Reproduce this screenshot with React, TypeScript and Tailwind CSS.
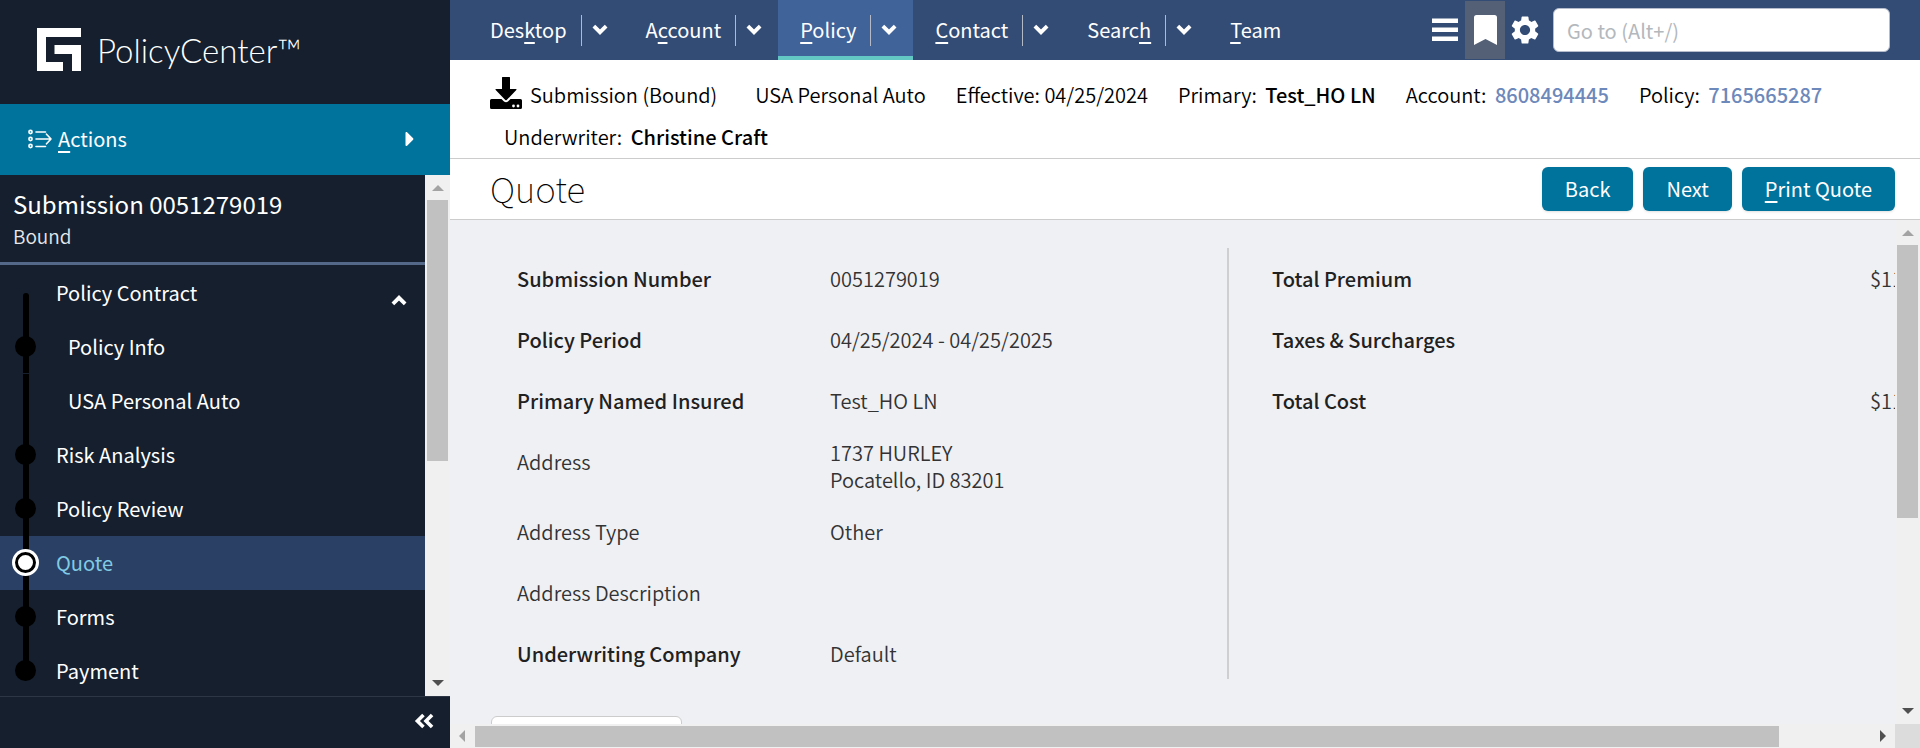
import React from "react";
import { FaCaretRight } from "react-icons/fa";
import { MdSettings } from "react-icons/md";

function Key({ children }: { children: React.ReactNode }) {
  return <span className="underline decoration-2 underline-offset-4 [text-decoration-skip-ink:none]">{children}</span>;
}

function Logo() {
  return (
    <svg className="size-11" viewBox="0 0 44 44" fill="#fff" aria-hidden="true">
      <path d="M0 0H44V9H9V34H26V43H0Z" />
      <path d="M17.500 17H44V43H35V26H17.500Z" />
    </svg>
  );
}

function ActionsIcon() {
  return (
    <svg className="h-5 w-6" viewBox="0 0 24 20" fill="none" stroke="#fff" strokeWidth="1.6" strokeLinecap="round" strokeLinejoin="round" aria-hidden="true">
      <circle cx="2.500" cy="3" r="1.600" />
      <circle cx="2.500" cy="10" r="1.600" />
      <circle cx="2.500" cy="17" r="1.600" />
      <path d="M8 3H17.500M8 10H23M8 17.500H17.500M18.500 5.200 23 10 18.500 14.800" />
    </svg>
  );
}

function Chevron({ up }: { up?: boolean }) {
  return (
    <svg className={up ? "mt-[14px] size-4" : "size-4"} viewBox="0 0 16 16" fill="none" stroke="#fff" strokeWidth="3.8" strokeLinecap="square" aria-hidden="true">
      <path d={up ? "M3.200 10.600 8 5.800 12.800 10.600" : "M3.200 5.400 8 10.200 12.800 5.400"} />
    </svg>
  );
}

function CollapseIcon() {
  return (
    <svg className="h-4 w-5" viewBox="0 0 20 16" fill="none" stroke="#fff" strokeWidth="3.6" strokeLinecap="square" aria-hidden="true">
      <path d="M8.200 3.200 3.400 8 8.200 12.800M16.800 3.200 12 8 16.800 12.800" />
    </svg>
  );
}

function SubmissionIcon() {
  return (
    <svg className="size-8" viewBox="0 0 32 32" aria-hidden="true">
      <path d="M12 0.500Q12 0 12.500 0H19.500Q20 0 20 0.500V12H26Q27 12 26.300 13L16.700 23Q16 23.700 15.300 23L5.700 13Q5 12 6 12H12Z" />
      <path d="M1.500 22H11.500L14 24.500Q16 26 18 24.500L20.500 22H30.500Q32 22 32 23.500V30.500Q32 32 30.500 32H1.500Q0 32 0 30.500V23.500Q0 22 1.500 22Z" />
      <circle cx="23.500" cy="29" r="1.400" fill="#fff" />
      <circle cx="28" cy="29" r="1.400" fill="#fff" />
    </svg>
  );
}

function Arrow({ dir, muted }: { dir: "up" | "down" | "left" | "right"; muted?: boolean }) {
  const d = {
    up: "M6 9 12 3 18 9Z",
    down: "M6 3H18L12 9Z",
    left: "M9 6V18L3 12Z",
    right: "M3 6V18L9 12Z",
  }[dir];
  const vertical = dir === "up" || dir === "down";
  return (
    <svg className={vertical ? "h-3 w-6" : "h-6 w-3"} viewBox={vertical ? "0 0 24 12" : "0 0 12 24"} fill={muted ? "#a3a3a3" : "#505050"} aria-hidden="true">
      <path d={d} />
    </svg>
  );
}

const tabs = [
  { pre: "Des", key: "k", post: "top", menu: true },
  { pre: "A", key: "c", post: "count", menu: true },
  { pre: "", key: "P", post: "olicy", menu: true, active: true },
  { pre: "", key: "C", post: "ontact", menu: true },
  { pre: "Searc", key: "h", post: "", menu: true },
  { pre: "", key: "T", post: "eam", menu: false },
];

const steps = [
  { label: "Policy Contract", kind: "group" },
  { label: "Policy Info", kind: "sub", dot: true },
  { label: "USA Personal Auto", kind: "sub" },
  { label: "Risk Analysis", kind: "step", dot: true },
  { label: "Policy Review", kind: "step", dot: true },
  { label: "Quote", kind: "step", current: true },
  { label: "Forms", kind: "step", dot: true },
  { label: "Payment", kind: "step", dot: true },
];

const details: { label: string; lines: string[]; bold?: boolean }[] = [
  { label: "Submission Number", lines: ["0051279019"], bold: true },
  { label: "Policy Period", lines: ["04/25/2024 - 04/25/2025"], bold: true },
  { label: "Primary Named Insured", lines: ["Test_HO LN"], bold: true },
  { label: "Address", lines: ["1737 HURLEY", "Pocatello, ID 83201"] },
  { label: "Address Type", lines: ["Other"] },
  { label: "Address Description", lines: [] },
  { label: "Underwriting Company", lines: ["Default"], bold: true },
];

const totals = [
  { label: "Total Premium", value: "$11" },
  { label: "Taxes & Surcharges", value: "" },
  { label: "Total Cost", value: "$11" },
];

function Sidebar() {
  return (
    <aside className="flex w-[450px] shrink-0 flex-col bg-[#151f2e] text-white">
      <div className="flex h-[104px] shrink-0 items-center gap-4 pb-1 pl-[37px]">
        <Logo />
        <span className="font-['Lato'] text-[33px] leading-10 font-light">PolicyCenter™</span>
      </div>
      <button type="button" className="flex h-[71px] shrink-0 items-center bg-[#00739d] pr-7 pb-[2px] pl-7 text-left text-[20px]">
        <ActionsIcon />
        <span className="ml-[6px] flex-1"><Key>A</Key>ctions</span>
        <FaCaretRight className="size-6" />
      </button>
      <div className="flex min-h-0 flex-1">
        <div className="min-w-0 flex-1 overflow-hidden">
          <div className="h-[90px] border-b-[3px] border-[#54698a] px-[13px] pt-[13px]">
            <div className="text-[24px] leading-8">Submission 0051279019</div>
            <div className="text-[19px] leading-8 font-[350] text-[#e6e8eb]">Bound</div>
          </div>
          <ul className="pt-px">
            {steps.map((s, i) => (
              <li key={s.label} className={"relative " + (s.current ? "bg-[#2a4064]" : "")}>
                <span className={"absolute left-[23px] w-[6px] bg-black " + (i === 0 ? "top-1/2 bottom-0 rounded-t" : i === 1 ? "top-0 bottom-px" : i === steps.length - 1 ? "top-0 bottom-1/2" : "inset-y-0")} />
                {s.dot && <span className="absolute top-4 left-[15px] size-[21px] rounded-full bg-black" />}
                {s.current && (
                  <span className="absolute top-[13px] left-3 flex size-[27px] items-center justify-center rounded-full bg-white">
                    <span className="size-[21px] rounded-full border-[3px] border-black bg-white" />
                  </span>
                )}
                <a href="#" className={"flex h-[54px] items-center justify-between pr-[18px] text-[20px] " + (s.kind === "sub" ? "pl-[68px] " : "pl-14 ") + (s.current ? "text-[#80cbe3]" : "")}>
                  {s.label}
                  {s.kind === "group" && <Chevron up />}
                </a>
              </li>
            ))}
          </ul>
        </div>
        <div className="flex w-[25px] shrink-0 flex-col items-center bg-[#f0f0f0] py-[7px]">
          <Arrow dir="up" muted />
          <div className="mt-[6px] h-[261px] w-[21px] shrink-0 bg-[#c1c1c1]" />
          <div className="flex-1" />
          <Arrow dir="down" />
        </div>
      </div>
      <div className="flex h-[52px] shrink-0 items-center justify-end border-t border-[#2c3645] pr-4 pb-1">
        <button type="button" aria-label="Collapse"><CollapseIcon /></button>
      </div>
    </aside>
  );
}

function TopBar() {
  return (
    <header className="flex h-[60px] shrink-0 items-stretch bg-[#334c75] pr-[30px] pl-[18px] text-white">
      <nav className="flex items-stretch text-[20px]">
        {tabs.map((t) => (
          <div key={t.key} className={"flex items-center pl-[22px] " + (t.active ? "border-b-4 border-[#63c7c4] bg-[#40639a] pt-1" : "")}>
            <a href="#"><span>{t.pre}</span><Key>{t.key}</Key>{t.post}</a>
            {t.menu && (
              <>
                <span className="mr-[10px] ml-[14px] h-[31px] w-px bg-[#b3bac6]" />
                <button type="button" aria-label="Open menu" className="pr-4"><Chevron /></button>
              </>
            )}
          </div>
        ))}
      </nav>
      <div className="ml-auto flex items-center">
        <button type="button" aria-label="Menu">
          <svg className="h-6 w-[26px]" viewBox="0 0 26 24" fill="#fff"><path d="M0 0.500H26V5H0ZM0 9.500H26V14H0ZM0 18.500H26V23H0Z" /></svg>
        </button>
        <button type="button" aria-label="Bookmark" className="mr-[3px] ml-[7px] flex h-[58px] w-10 items-center justify-center bg-[#536075]">
          <svg className="h-[30px] w-[23px]" viewBox="0 0 23 30" fill="#fff"><path d="M2.500 0H20.500Q23 0 23 2.500V30L11.500 24L0 30V2.500Q0 0 2.500 0Z" /></svg>
        </button>
        <button type="button" aria-label="Settings"><MdSettings className="size-[34px]" /></button>
        <input aria-label="Go to" placeholder="Go to (Alt+/)" className="ml-[11px] h-11 w-[337px] rounded-md border border-[#b5bccb] bg-white px-[13px] text-[20px] text-black placeholder:text-[#b3b8bd]" />
      </div>
    </header>
  );
}

function InfoBar() {
  return (
    <div className="shrink-0 border-b border-[#ccc] bg-white pt-[14px] pl-10 text-[20px] leading-[42px] font-[350] text-black">
      <div className="flex flex-wrap items-center gap-x-[30px]">
        <span className="flex items-center gap-2 pr-2"><span className="-mt-1"><SubmissionIcon /></span>Submission (Bound)</span>
        <span>USA Personal Auto</span>
        <span>Effective: 04/25/2024</span>
        <span>Primary: <b className="ml-1 font-medium">Test_HO LN</b></span>
        <span>Account: <a href="#" className="ml-1 font-medium text-[#6d88ba]">8608494445</a></span>
        <span>Policy: <a href="#" className="ml-1 font-medium text-[#6d88ba]">7165665287</a></span>
      </div>
      <div className="pl-[14px]">Underwriter: <b className="ml-1 font-medium">Christine Craft</b></div>
    </div>
  );
}

function ActionButton({ children }: { children: React.ReactNode }) {
  return (
    <button type="button" className="h-11 rounded-md bg-[#00739d] px-[23px] text-[20px] text-white shadow-sm">{children}</button>
  );
}

export default function App() {
  return (
    <div className="flex h-screen overflow-hidden bg-[#eff0f4] font-['Noto_Sans_CJK_SC','Noto_Sans',sans-serif] leading-7">
      <Sidebar />
      <main className="flex min-w-0 flex-1 flex-col">
        <TopBar />
        <InfoBar />
        <div className="flex h-[61px] shrink-0 items-center gap-[10px] border-b border-[#ccc] bg-white pr-[25px] pl-10">
          <h1 className="flex-1 pb-[2px] text-[35px] leading-10 font-thin text-black">Quote</h1>
          <ActionButton>Back</ActionButton>
          <ActionButton>Next</ActionButton>
          <ActionButton><Key>P</Key>rint Quote</ActionButton>
        </div>
        <div className="flex min-h-0 flex-1">
          <div className="min-w-0 flex-1 overflow-hidden pt-7 pl-[41px] text-[20px] leading-[61px] text-[#212121]">
            <div className="flex">
              <dl className="w-[738px] shrink-0 border-r-2 border-[#cfcfcf] pl-[26px]">
                {details.map((d) => (
                  <div key={d.label} className={"flex last:h-14 " + (d.lines.length > 1 ? "h-[70px]" : "h-[61px]")}>
                    <dt className={"w-[313px] " + (d.bold ? "font-medium" : "font-[350] text-[#333]")}>{d.label}</dt>
                    <dd className={"font-[350] text-[#333] " + (d.lines.length > 1 ? "pt-2 leading-[27px]" : "")}>
                      {d.lines.map((l) => <div key={l}>{l}</div>)}
                    </dd>
                  </div>
                ))}
              </dl>
              <dl className="shrink-0 pl-[43px]">
                {totals.map((t) => (
                  <div key={t.label} className="flex h-[61px]">
                    <dt className="w-[598px] font-medium">{t.label}</dt>
                    <dd className="font-[350] text-[#333]">{t.value}</dd>
                  </div>
                ))}
              </dl>
            </div>
            <div className="mt-[37px] h-11 w-[191px] rounded-md border border-[#ccc] bg-white" />
          </div>
          <div className="flex w-[25px] shrink-0 flex-col items-center bg-[#f0f0f0] py-[7px]">
            <Arrow dir="up" muted />
            <div className="mt-[6px] h-[273px] w-[21px] shrink-0 bg-[#c1c1c1]" />
            <div className="flex-1" />
            <Arrow dir="down" />
          </div>
        </div>
        <div className="flex h-6 shrink-0 items-center bg-[#f0f0f0]">
          <div className="flex flex-1 items-center px-[6px]">
            <Arrow dir="left" muted />
            <div className="ml-[7px] h-[21px] w-[91%] bg-[#c1c1c1]" />
            <div className="flex-1" />
            <Arrow dir="right" />
          </div>
          <div className="h-6 w-[25px] bg-[#dcdcdc]" />
        </div>
      </main>
    </div>
  );
}
